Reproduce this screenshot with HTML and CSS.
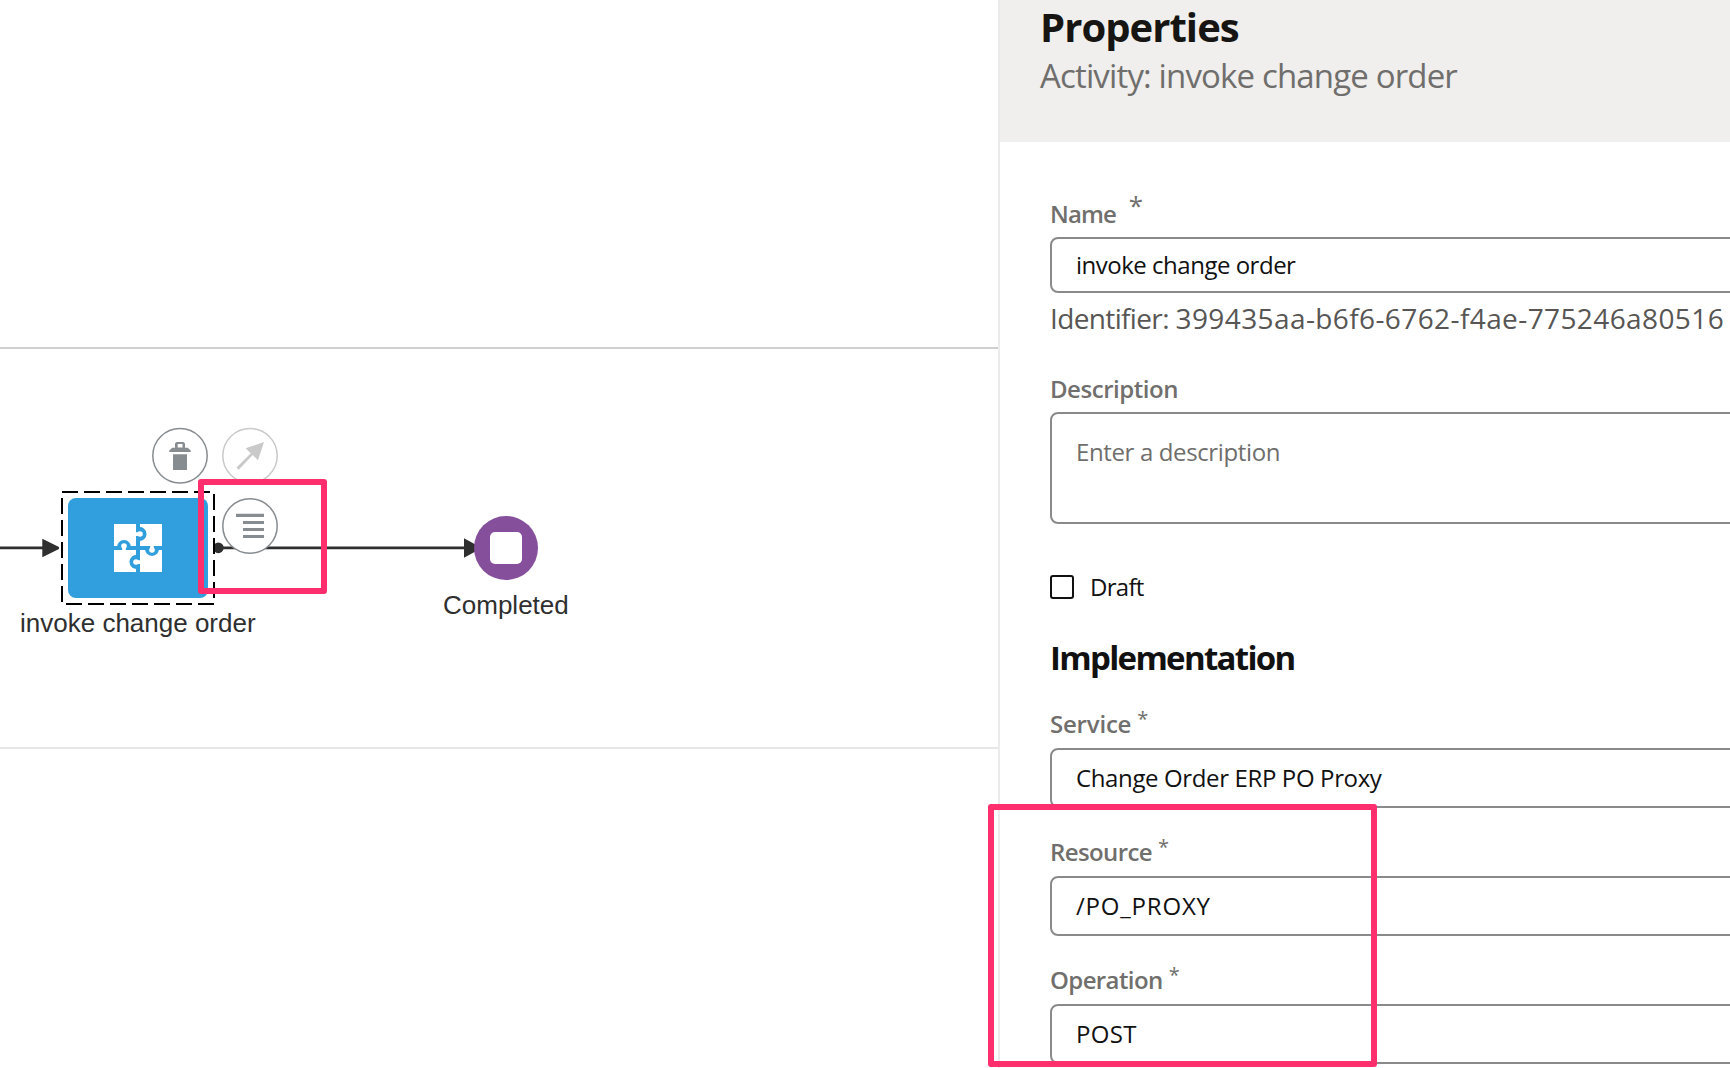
FILE: index.html
```html
<!DOCTYPE html>
<html lang="en">
<head>
<meta charset="utf-8">
<title>Properties</title>
<link rel="stylesheet" href="styles.css">
</head>
<body>
<main class="editor">
  <section class="canvas">
    <svg class="diagram" width="998" height="1068" viewBox="0 0 998 1068">
      <rect class="lane-top" x="0" y="347" width="998" height="2"/>
      <rect class="lane-bottom" x="0" y="747" width="998" height="2"/>

      <path class="flow" d="M0 547.8H44M214 547.8H466"/>
      <path class="flow-head" d="M42.3 538.7V557.3L59 549V547ZM464 538.3V557.7L480 549V547Z"/>
      <circle class="flow-head" cx="218.3" cy="547.8" r="5.4"/>

      <rect class="task" x="68" y="498" width="140" height="100" rx="8"/>
      <rect class="selection" x="62" y="492" width="152" height="112"/>
      <g class="puzzle">
        <rect class="w" x="114" y="524" width="48" height="48"/>
        <path class="b" d="M136 524h4v48h-4zM114 546h48v4h-48z"/>
        <path class="b" d="M138 527.3a6.9 6.9 0 1 1 0 13.4zM138 555.3a6.9 6.9 0 1 0 0 13.4zM117.2 548a6.9 6.9 0 1 1 13.6 0zM145.2 548a6.9 6.9 0 1 0 13.6 0z"/>
        <path class="w" d="M135.8 532.3h3v3.6h-3zM137 560.3h3.4v3.6h-3.4zM122.2 546h3.6v4.2h-3.6zM150.2 545.8h3.6v4h-3.6z"/>
        <circle class="w" cx="140" cy="534" r="2.8"/>
        <circle class="w" cx="136" cy="562" r="2.8"/>
        <circle class="w" cx="124" cy="546" r="2.8"/>
        <circle class="w" cx="152" cy="550" r="2.8"/>
      </g>
      <text class="node-label" x="20" y="632">invoke change order</text>

      <circle class="end" cx="506" cy="548" r="32"/>
      <rect class="w" x="490" y="532" width="32" height="32" rx="5"/>
      <text class="node-label" x="443" y="614">Completed</text>

      <circle class="tool" cx="180" cy="455.8" r="27.2"/>
      <path class="glyph" fill-rule="evenodd" d="M173 454.3h14V470h-14zM169.3 452v-1.6l3-2.6h2.7v-4.2l1.6-1.6h6.8l1.6 1.6v4.2h2.7l3 2.6v1.6zM177.7 443.9v3.5h4.8v-3.5z"/>
      <circle class="tool tool-off" cx="250" cy="455.8" r="27.2"/>
      <path class="glyph-off" d="M264 442L258 460.3 252.7 455 238.7 469.7 236.5 467.5 250.8 453.2 245.7 448.2Z"/>
      <circle class="tool" cx="250" cy="526" r="27.2"/>
      <path class="glyph" d="M236 513.8h28v3.2h-28zM243 520.9h21v3.2h-21zM243 527.9h21v3.2h-21zM243 534.9h21v3.2h-21z"/>
    </svg>
  </section>

  <aside class="panel">
    <header class="panel-head">
      <h1 class="title">Properties</h1>
      <p class="subtitle">Activity: invoke change order</p>
    </header>
    <form class="form">
      <div class="label label-name"><span>Name</span><span class="req req-big">*</span></div>
      <div class="input input-name">invoke change order</div>
      <div class="identifier"><span class="id-key">Identifier: </span><span class="id-value">399435aa-b6f6-6762-f4ae-775246a80516</span></div>
      <div class="label">Description</div>
      <div class="input textarea">Enter a description</div>
      <div class="check"><i class="box"></i><span class="check-text">Draft</span></div>
      <h2 class="section">Implementation</h2>
      <div class="label label-service"><span>Service</span><span class="req">*</span></div>
      <div class="input select">Change Order ERP PO Proxy</div>
      <div class="label label-select"><span>Resource</span><span class="req">*</span></div>
      <div class="input select select-path">/PO_PROXY</div>
      <div class="label label-select"><span>Operation</span><span class="req">*</span></div>
      <div class="input select select-method">POST</div>
    </form>
  </aside>
  <div class="mark mark-flow"></div>
  <div class="mark mark-fields"></div>
</main>
</body>
</html>
```

FILE: styles.css
```css
* { box-sizing: border-box; }
body { margin: 0; font-family: "Open Sans", "Noto Sans", sans-serif; background: #fff; overflow: hidden; }
h1, h2, p { margin: 0; }

.editor { position: relative; display: flex; width: 1730px; height: 1068px; overflow: hidden; }
.canvas { flex: 0 0 998px; }
.diagram { display: block; }

.lane-top { fill: #cfcfcf; }
.lane-bottom { fill: #e6e6e6; }
.flow { stroke: #2f2f2f; stroke-width: 2.8; fill: none; }
.flow-head { fill: #2f2f2f; }
.task, .b { fill: #319fdd; }
.w { fill: #fff; }
.selection { fill: none; stroke: #000; stroke-width: 2; stroke-dasharray: 16 6; }
.end { fill: #854f9b; }
.tool { fill: #fff; stroke: #878c90; stroke-width: 1.5; }
.tool-off { stroke: #c9c9c9; }
.glyph { fill: #878c90; }
.glyph-off { fill: #c9c9c9; }
.node-label { font: 26px "Liberation Sans", Arial, sans-serif; fill: #2f2f2f; }

.panel { flex: 1; min-width: 0; border-left: 2px solid #ebebeb; white-space: nowrap; }
.panel-head { height: 142px; padding: 0 0 0 40px; background: #f0efed; }
.title { padding-top: 3px; font-size: 40px; line-height: 48px; font-weight: 700; letter-spacing: -0.95px; color: #161513; }
.subtitle { padding-top: 1px; font-size: 33px; line-height: 48px; letter-spacing: -0.85px; color: #6f6e6c; }

.form { display: flex; flex-direction: column; padding: 57px 0 0 50px; font-size: 24px; color: #111; }
.label { display: flex; height: 38px; line-height: 30px; font-weight: 600; letter-spacing: -0.47px; color: #706f6d; }
.label-name { letter-spacing: -0.9px; }
.label-service { letter-spacing: -0.2px; line-height: 28px; }
.label-select { letter-spacing: -0.6px; line-height: 28px; }
.req { margin-left: 6px; font-size: 20px; font-weight: 400; line-height: 17px; }
.req-big { margin-left: 13px; font-size: 26px; line-height: 13px; }
.input { width: 720px; border: 2px solid #8a8a8a; border-radius: 8px; padding-left: 24px; letter-spacing: -0.49px; background: #fff; }
.input-name { height: 56px; line-height: 51px; }
.identifier { height: 81px; padding-top: 6px; font-size: 28px; line-height: 38px; color: #575654; white-space: pre; }
.id-key { letter-spacing: -0.64px; }
.id-value { letter-spacing: 0.4px; }
.textarea { height: 112px; padding-top: 22px; line-height: 32px; letter-spacing: -0.37px; color: #6f6e6c; }
.check { display: flex; align-items: center; gap: 16px; height: 32px; margin-top: 47px; }
.check-text { padding-bottom: 2px; letter-spacing: -0.7px; }
.box { width: 24px; height: 24px; border: 2px solid #111; border-radius: 3px; }
.section { height: 107px; padding-top: 32px; font-size: 33px; line-height: 45px; letter-spacing: -1.68px; color: #111; }
.select { height: 60px; line-height: 56px; margin-bottom: 30px; letter-spacing: -0.37px; }
.select-path { letter-spacing: 0.8px; }
.select-method { letter-spacing: 0.3px; }

.mark { position: absolute; border: 6px solid #ff2e6d; border-radius: 3px; }
.mark-flow { left: 198px; top: 479px; width: 129px; height: 115px; }
.mark-fields { left: 988px; top: 804px; width: 389px; height: 263px; }
```
